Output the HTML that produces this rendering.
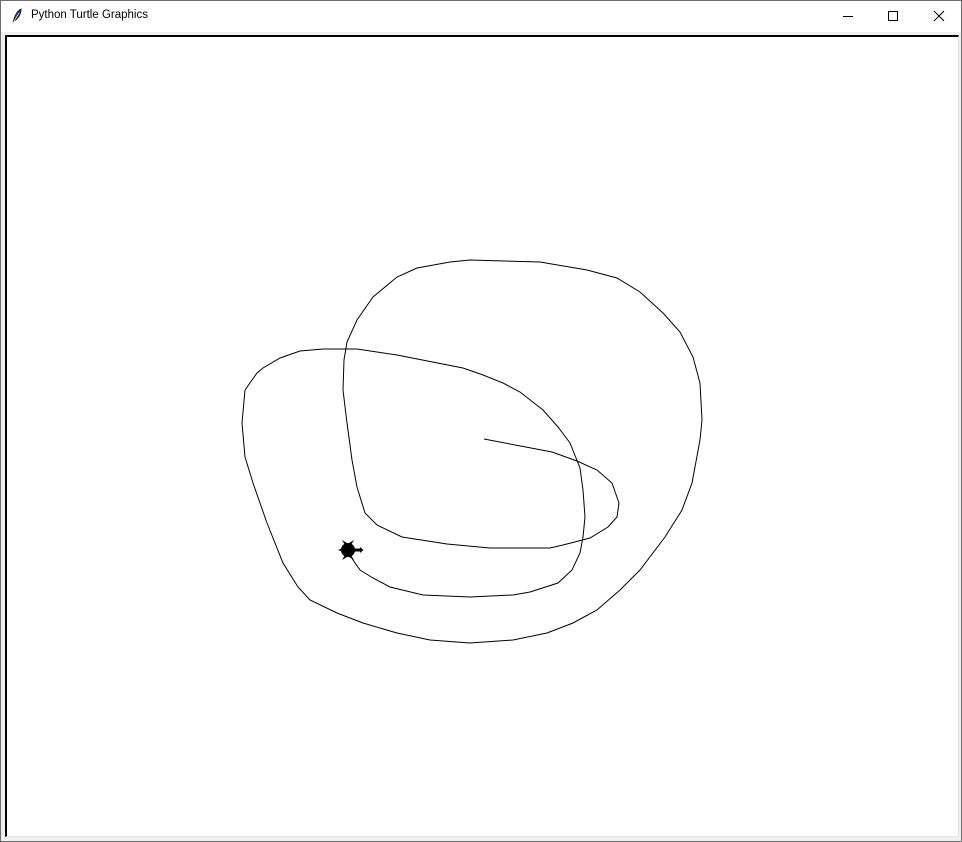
<!DOCTYPE html>
<html><head><meta charset="utf-8"><style>
html,body{margin:0;padding:0;width:962px;height:842px;overflow:hidden;background:#f0f0f0;font-family:"Segoe UI","Liberation Sans",sans-serif}
.win{position:absolute;left:0;top:0;width:960px;height:840px;border:1px solid #6e6e6e;background:#f0f0f0}
.title{position:absolute;left:0;top:0;width:960px;height:31px;background:#fff}
.title span{position:absolute;left:30px;top:8px;font-size:11.5px;color:#000}
.canvas{position:absolute;left:4px;top:34px;width:951px;height:799px;background:#fff;border-left:2px solid #000;border-top:2px solid #000;border-right:1px solid #e3e3e3;border-bottom:1px solid #e3e3e3}
</style></head><body>
<div class="win">
<div class="title">
<svg style="position:absolute;left:10px;top:7px" width="12" height="16" viewBox="0 0 12 16"><path d="M2 15 C3 9 6 3 10 1 C10 6 7 11 3 13 Z" fill="#2a4a8a" stroke="#000" stroke-width="0.8"/><path d="M2 15 L8 5" stroke="#fff" stroke-width="0.7"/></svg>
<span>Python Turtle Graphics</span>
<svg style="position:absolute;left:840px;top:8px" width="110" height="16"><path d="M2 7.5 H12" stroke="#000" stroke-width="1"/><rect x="47.5" y="2.5" width="9" height="9" fill="none" stroke="#000"/><path d="M93 2 L103 12 M103 2 L93 12" stroke="#000" stroke-width="1"/></svg>
</div>
<div class="canvas"></div>
</div>
<svg style="position:absolute;left:0;top:0" width="962" height="842">
<polyline fill="none" stroke="#000" stroke-width="1" points="484,439 552,452 577,461 597,470 612,483 619,503 617,517 608,527 590,538 563,545 550,548 490,548 447,544 402,537 377,525 365,513 357,487 352,460 347,423 343,390 344,360 347,342 357,320 373,297 397,277 417,268 450,262 470,260 540,262 587,270 617,278 640,292 663,313 680,332 693,357 700,383 702,420 700,440 692,483 682,510 665,537 640,570 620,590 597,610 573,623 547,633 513,640 470,643 430,640 397,633 363,623 337,613 310,600 298,587 283,563 267,523 253,483 245,457 242,423 245,390 257,373 263,368 280,358 300,351 323,349 357,349 397,355 463,368 483,375 503,383 520,392 543,410 558,427 570,443 580,468 583,490 585,517 583,537 580,553 572,570 558,583 530,592 513,595 470,597 423,595 390,587 373,578 360,570 353,560 348,551"/>
<g transform="translate(348,550)" fill="#000">
<circle cx="0" cy="0" r="7"/>
<rect x="5" y="-1.5" width="9" height="3"/>
<path d="M12 -3 L15.5 0 L12 3 Z"/>
<path d="M-3 -5 L-6 -10 L-1 -7 Z M3 -5 L6 -10 L1 -7 Z M-3 5 L-6 10 L-1 7 Z M3 5 L6 10 L1 7 Z"/>
<path d="M-6 -1.5 L-10 0 L-6 1.5 Z"/>
</g>
</svg>
</body></html>
